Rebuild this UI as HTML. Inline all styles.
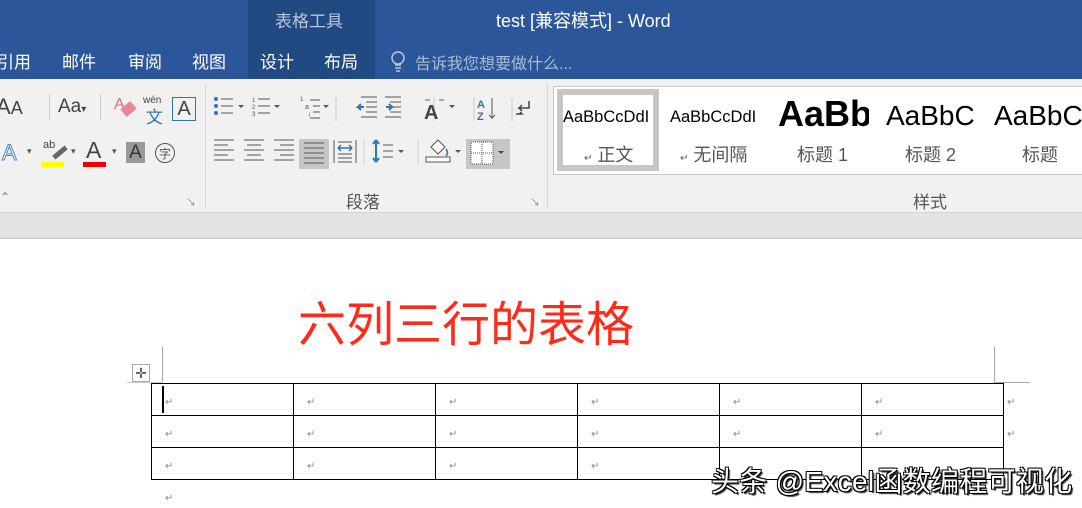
<!DOCTYPE html>
<html><head><meta charset="utf-8"><style>
*{margin:0;padding:0;box-sizing:border-box}
body{width:1082px;height:508px;overflow:hidden;position:relative;background:#fff;font-family:"Liberation Sans","Noto Sans CJK SC",sans-serif}
.a{position:absolute;white-space:nowrap}
.tab{position:absolute;top:48px;font-size:17px;color:#fff}
td{width:142px;height:32px;border:1.5px solid #000;padding:0}
</style></head><body>
<div class="a" style="left:0;top:0;width:1082px;height:79px;background:#2b579a"></div>
<div class="a" style="left:248px;top:0;width:127px;height:79px;background:#214a82"></div>
<div class="a" style="left:275px;top:7px;font-size:17px;color:#b9c7dc">表格工具</div>
<div class="a" style="left:496px;top:7px;font-size:18px;color:#fff">test [兼容模式] - Word</div>
<div class="tab" style="left:-3px">引用</div>
<div class="tab" style="left:62px">邮件</div>
<div class="tab" style="left:128px">审阅</div>
<div class="tab" style="left:192px">视图</div>
<div class="tab" style="left:260px">设计</div>
<div class="tab" style="left:324px">布局</div>
<svg class="a" style="left:390px;top:50px" width="16" height="22"><circle cx="8" cy="8" r="6" fill="none" stroke="#b9c7dc" stroke-width="1.5"/><path d="M5 15h6M5 18h6M6 21h4" stroke="#b9c7dc" stroke-width="1.5"/></svg>
<div class="tab" style="left:415px;color:#aabbd5;font-size:16px;top:50px">告诉我您想要做什么...</div>

<div class="a" style="left:0;top:79px;width:1082px;height:133px;background:#f1f1f1"></div>
<div class="a" style="left:205px;top:84px;width:1px;height:124px;background:#d6d6d6"></div>
<div class="a" style="left:547px;top:84px;width:1px;height:124px;background:#d6d6d6"></div>
<div class="a" style="left:0;top:212px;width:1082px;height:27px;background:#e3e3e3;border-top:1px solid #d4d4d4;border-bottom:1px solid #c8c8c8"></div>

<div class="a" style="left:-4px;top:94px;font-size:22px;color:#444">A<span style="font-size:18px">A</span></div>
<div class="a" style="left:49px;top:94px;width:1px;height:26px;background:#ccc"></div>
<div class="a" style="left:58px;top:96px;font-size:19px;color:#444">Aa<span style="font-size:10px">▾</span></div>
<div class="a" style="left:100px;top:94px;width:1px;height:26px;background:#ccc"></div>
<div class="a" style="left:114px;top:96px;font-size:16px;color:#d9707a">A</div>
<div class="a" style="left:122px;top:104px;width:13px;height:10px;background:#e8869a;transform:rotate(-40deg)"></div>
<div class="a" style="left:143px;top:95px;font-size:10px;color:#444">wén</div>
<div class="a" style="left:146px;top:103px;font-size:17px;color:#2e75b6">文</div>
<div class="a" style="left:172px;top:97px;width:24px;height:24px;border:1px solid #2e75b6;font-size:20px;color:#444;text-align:center;line-height:22px">A</div>
<div class="a" style="left:2px;top:140px;font-size:22px;color:#fff;-webkit-text-stroke:1px #4a86c8">A</div>
<div class="a" style="left:27px;top:146px;font-size:9px;color:#555">▾</div>
<div class="a" style="left:41px;top:162px;width:23px;height:5px;background:#ffff00"></div>
<div class="a" style="left:43px;top:139px;font-size:11px;color:#444">ab</div>
<div class="a" style="left:52px;top:150px;width:16px;height:5px;background:#666;transform:rotate(-40deg)"></div>
<div class="a" style="left:71px;top:146px;font-size:9px;color:#555">▾</div>
<div class="a" style="left:86px;top:137px;font-size:23px;color:#444">A</div>
<div class="a" style="left:83px;top:162px;width:23px;height:5px;background:#e00"></div>
<div class="a" style="left:112px;top:146px;font-size:9px;color:#555">▾</div>
<div class="a" style="left:126px;top:142px;width:19px;height:21px;background:#999;font-size:19px;color:#333;text-align:center;line-height:21px">A</div>
<svg class="a" style="left:154px;top:142px" width="22" height="22"><circle cx="11" cy="11" r="9.5" fill="none" stroke="#555"/><text x="11" y="16" font-size="12" text-anchor="middle" fill="#555" font-family="Noto Sans CJK SC">字</text></svg>
<div class="a" style="left:0;top:190px;font-size:12px;color:#777">⌃</div>
<div class="a" style="left:186px;top:194px;font-size:10px;color:#888">↘</div>

<svg class="a" style="left:206px;top:92px" width="340" height="80" stroke="#555" fill="none">
<g fill="#2e75b6" stroke="none"><circle cx="10" cy="7" r="2"/><circle cx="10" cy="14" r="2"/><circle cx="10" cy="21" r="2"/></g>
<path d="M15 7h12M15 14h12M15 21h12M52 7h12M52 14h12M52 21h12M104 8h10M107 14h7M107 20h7M104 26h10"/>
<text x="46" y="10" font-size="6" fill="#555" stroke="none">1</text><text x="46" y="17" font-size="6" fill="#555" stroke="none">2</text><text x="46" y="24" font-size="6" fill="#555" stroke="none">3</text>
<text x="94" y="9" font-size="6" fill="#555" stroke="none">1</text><text x="99" y="17" font-size="7" fill="#555" stroke="none">a</text><text x="103" y="25" font-size="6" fill="#555" stroke="none">i</text>
<path d="M32 13l3 3 3-3M68 13l3 3 3-3M117 13l3 3 3-3" fill="#555" stroke="none"/>
<path d="M130 5v24M228 5v24M268 5v24" stroke="#ccc"/>
<path d="M155 5h16M160 10h11M160 15h11M160 20h11M155 25h16M179 5h16M184 10h11M184 15h11M184 20h11M179 25h16"/>
<path d="M158 15h-6l3-3M152 15l3 3M180 15h6l-3-3M186 15l-3 3" stroke="#2e75b6" stroke-width="2"/>
<text x="218" y="27" font-size="20" font-weight="bold" fill="#444" stroke="none">A</text>
<path d="M219 8h5M233 8h5" stroke="#2e75b6"/>
<path d="M243 13l3 3 3-3" fill="#555" stroke="none"/>
<text x="271" y="16" font-size="11" font-weight="bold" fill="#2e75b6" stroke="none">A</text>
<text x="271" y="28" font-size="11" font-weight="bold" fill="#7b4fa6" stroke="none">Z</text>
<path d="M286 6v20l-3-3M286 26l3-3"/>
<path d="M306 6v24" stroke="#ccc"/>
<path d="M323 9v7h-10l3-3M313 16l3 3M310 22h6l-2-2" stroke="#444" stroke-width="1.5"/>
<g transform="translate(0,48)">
<path d="M8 0h20M8 5h14M8 10h20M8 15h14M8 20h20M38 0h20M41 5h14M38 10h20M41 15h14M38 20h20M68 0h20M74 5h14M68 10h20M74 15h14M68 20h20"/>
</g>
<rect x="93" y="47" width="30" height="30" fill="#c6c6c6" stroke="none"/>
<path d="M98 51h20M98 56h20M98 61h20M98 66h20M98 71h20"/>
<path d="M128 48v23M150 48v23M132 50h14M132 66h14M132 70h14M132 62h14" />
<path d="M132 56h14M132 56l3-3M132 56l3 3M146 56l-3-3M146 56l-3 3" stroke="#2e75b6" stroke-width="1.5"/>
<path d="M158 48v24" stroke="#ccc"/>
<path d="M170 48v22M170 48l-3 4M170 48l3 4M170 70l-3-4M170 70l3-4" stroke="#2e75b6" stroke-width="2"/>
<path d="M177 53h10M177 59h10M177 65h10"/>
<path d="M192 58l3 3 3-3M249 58l3 3 3-3" fill="#555" stroke="none"/>
<path d="M212 48v24" stroke="#ccc"/>
<rect x="220" y="65" width="24" height="5" fill="#fff"/>
<path d="M225 55l7-7 7 7-7 7z" fill="#fff"/>
<path d="M240 57q3 4 0 7" stroke="#2e75b6" stroke-width="1.5"/>
<rect x="260" y="47" width="44" height="30" fill="#c6c6c6" stroke="none"/>
<rect x="265" y="50" width="22" height="22" fill="#fff" stroke="#555" stroke-dasharray="1 1"/>
<path d="M276 50v22M265 61h22" stroke-dasharray="1 1"/>
<path d="M292 59l3 3 3-3" fill="#444" stroke="none"/>
</svg>
<div class="a" style="left:346px;top:188px;font-size:17px;color:#555">段落</div>
<div class="a" style="left:530px;top:194px;font-size:10px;color:#888">↘</div>

<div class="a" style="left:553px;top:86px;width:540px;height:89px;background:#fff;border:1px solid #c6c6c6"></div>
<div class="a" style="left:557px;top:89px;width:102px;height:82px;border:6px solid #c6c6c6"></div>
<div class="a" style="left:563px;top:108px;font-size:16.5px;color:#000">AaBbCcDdI</div>
<div class="a" style="left:584px;top:141px;font-size:18px;color:#555"><span style="font-size:10px">↵</span> 正文</div>
<div class="a" style="left:670px;top:108px;font-size:16.5px;color:#000">AaBbCcDdI</div>
<div class="a" style="left:680px;top:141px;font-size:18px;color:#555"><span style="font-size:10px">↵</span> 无间隔</div>
<div class="a" style="left:778px;top:93px;width:91px;overflow:hidden;font-size:36px;font-weight:bold;color:#000">AaBb</div>
<div class="a" style="left:797px;top:141px;font-size:18px;color:#555">标题 1</div>
<div class="a" style="left:886px;top:100px;width:90px;overflow:hidden;font-size:28px;color:#000">AaBbC</div>
<div class="a" style="left:905px;top:141px;font-size:18px;color:#555">标题 2</div>
<div class="a" style="left:994px;top:100px;font-size:28px;color:#000">AaBbC</div>
<div class="a" style="left:1022px;top:141px;font-size:18px;color:#555">标题</div>
<div class="a" style="left:913px;top:188px;font-size:17px;color:#555">样式</div>

<div class="a" style="left:298px;top:285px;font-size:48px;color:#ff2a1a">六列三行的表格</div>
<div class="a" style="left:162px;top:347px;width:1px;height:36px;background:#aaa"></div>
<div class="a" style="left:994px;top:347px;width:1px;height:36px;background:#aaa"></div>
<div class="a" style="left:994px;top:382px;width:36px;height:1px;background:#aaa"></div>
<div class="a" style="left:127px;top:382px;width:36px;height:1px;background:#ccc"></div>
<div class="a" style="left:132px;top:364px;width:18px;height:18px;border:1px solid #aaa;font-size:14px;line-height:16px;text-align:center;color:#444">✛</div>
<table class="a" style="left:151px;top:383px;border-collapse:collapse">
<tr><td></td><td></td><td></td><td></td><td></td><td></td></tr>
<tr><td></td><td></td><td></td><td></td><td></td><td></td></tr>
<tr><td></td><td></td><td></td><td></td><td></td><td></td></tr>
</table>
<div class="a" style="left:162px;top:386px;width:1.5px;height:27px;background:#000"></div>
<div class="a" style="left:0;top:0;font-size:10px;color:#888">
<span class="a" style="left:165px;top:397px">↵</span><span class="a" style="left:307px;top:397px">↵</span><span class="a" style="left:449px;top:397px">↵</span><span class="a" style="left:591px;top:397px">↵</span><span class="a" style="left:733px;top:397px">↵</span><span class="a" style="left:875px;top:397px">↵</span><span class="a" style="left:1007px;top:397px">↵</span>
<span class="a" style="left:165px;top:429px">↵</span><span class="a" style="left:307px;top:429px">↵</span><span class="a" style="left:449px;top:429px">↵</span><span class="a" style="left:591px;top:429px">↵</span><span class="a" style="left:733px;top:429px">↵</span><span class="a" style="left:875px;top:429px">↵</span><span class="a" style="left:1007px;top:429px">↵</span>
<span class="a" style="left:165px;top:461px">↵</span><span class="a" style="left:307px;top:461px">↵</span><span class="a" style="left:449px;top:461px">↵</span><span class="a" style="left:591px;top:461px">↵</span>
<span class="a" style="left:165px;top:493px">↵</span>
</div>
<div class="a" style="left:711px;top:460px;font-size:28px;color:#fff;letter-spacing:0.3px;text-shadow:1px 1px 0 #000,-1px 1px 0 #000,1px -1px 0 #000,-1px -1px 0 #000,2px 2px 1px #333">头条 @Excel函数编程可视化</div>
</body></html>
